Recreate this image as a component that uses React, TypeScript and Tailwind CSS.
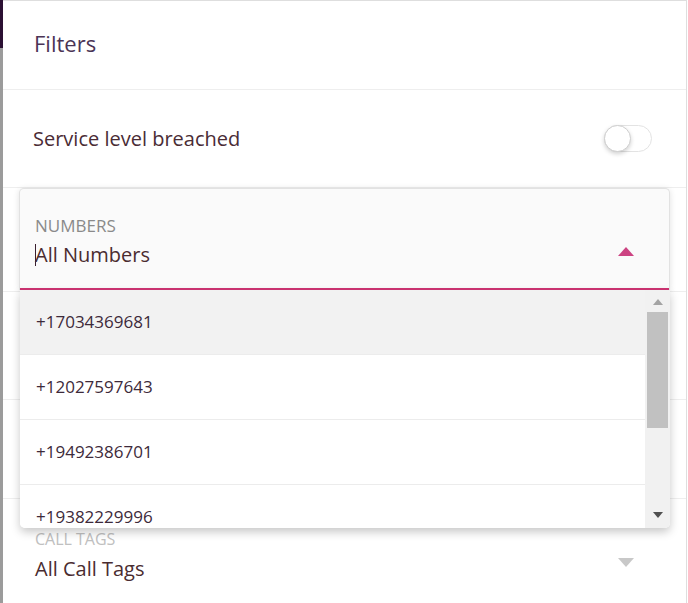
import React from "react";

const numbers = ["+17034369681", "+12027597643", "+19492386701", "+19382229996"];

function Caret({ up, className }: { up?: boolean; className: string }) {
  return (
    <svg width="16" height="9" viewBox="0 0 16 9" className={className}>
      {up ? <path d="M0 9 L8 0 L16 9 Z" fill="currentColor" /> : <path d="M0 0 L8 9 L16 0 Z" fill="currentColor" />}
    </svg>
  );
}

function Toggle() {
  return (
    <div className="relative w-[48px] h-[27px]">
      <div className="absolute inset-0 rounded-full border border-[#e3e3e3] bg-white" />
      <div className="absolute left-0 top-0 w-[27px] h-[27px] rounded-full bg-white border border-[#cfcfcf] shadow-[0_2px_4px_rgba(0,0,0,0.18)]" />
    </div>
  );
}

function NumbersDropdown() {
  return (
    <div className="absolute left-[16px] top-[187px] w-[651px]">
      {/* input */}
      <div className="h-[102px] rounded-t-[5px] border border-b-0 border-[#e2e2e2] bg-[#fafafa] shadow-[0_1px_6px_rgba(0,0,0,0.12)] flex flex-col">
        <div className="flex-1 flex items-end justify-between pl-[15px] pr-[35px] pb-[20px]">
          <div className="flex flex-col">
            <span className="text-[17px] leading-[20px] text-[#8a8a8a]">NUMBERS</span>
            <div className="flex items-center mt-[6px]">
              <span className="w-px h-[22px] bg-[#3a2030] -mr-px" />
              <span className="text-[20px] leading-[26px] text-[#4a2c30]">All Numbers</span>
            </div>
          </div>
          <Caret up className="text-[#cc4382] mb-[12px]" />
        </div>
        <div className="h-[2px] bg-[#c9326f]" />
      </div>
      {/* list */}
      <div className="ml-px w-[650px] h-[238px] flex bg-white rounded-b-[5px] overflow-hidden shadow-[0_4px_10px_rgba(0,0,0,0.22)]">
        <div className="flex-1 flex flex-col overflow-hidden">
          {numbers.map((n, i) => (
            <div
              key={n}
              className={`shrink-0 h-[65px] flex items-center pl-[16px] border-b border-[#ececec] text-[17px] text-[#3d2a3a] ${
                i === 0 ? "bg-[#f2f2f2]" : "bg-white"
              }`}
            >
              {n}
            </div>
          ))}
        </div>
        <div className="w-[25px] bg-[#f1f1f1] flex flex-col items-center">
          <svg width="10" height="6" viewBox="0 0 10 6" className="mt-[9px] text-[#a3a3a3]">
            <path d="M0 6 L5 0 L10 6 Z" fill="currentColor" />
          </svg>
          <div className="mt-[7px] w-[21px] h-[116px] bg-[#c1c1c1]" />
          <div className="flex-1" />
          <svg width="10" height="6" viewBox="0 0 10 6" className="mb-[10px] text-[#505050]">
            <path d="M0 0 L5 6 L10 0 Z" fill="currentColor" />
          </svg>
        </div>
      </div>
    </div>
  );
}

export default function App() {
  return (
    <div className="w-[688px] h-[603px] flex bg-white overflow-hidden" style={{ fontFamily: "'Open Sans', 'Noto Sans', sans-serif" }}>
      <div className="w-[3px] flex flex-col">
        <div className="h-[48px] bg-[#2b1033]" />
        <div className="flex-1 bg-[#9b9b9b]" />
      </div>
      <main className="relative w-[684px] border-t border-r border-[#dedede] bg-white flex flex-col">
        <header className="h-[89px] shrink-0 border-b border-[#eeeeee] flex items-center pl-[31px] pb-[3px]">
          <h1 className="text-[22px] text-[#4b3456]">Filters</h1>
        </header>

        <section className="h-[98px] shrink-0 border-b border-[#eeeeee] flex items-center justify-between pl-[30px] pr-[34px]">
          <span className="text-[20px] text-[#4a2c35]">Service level breached</span>
          <Toggle />
        </section>

        <section className="h-[104px] shrink-0 border-b border-[#eeeeee]" />
        <section className="h-[108px] shrink-0 border-b border-[#eeeeee]" />
        <section className="h-[99px] shrink-0 border-b border-[#eeeeee]" />

        <section className="flex-1 flex items-start justify-between pl-[32px] pr-[52px] pt-[30px]">
          <div className="flex flex-col">
            <span className="text-[16px] leading-[20px] text-[#c0c0c0]">CALL TAGS</span>
            <span className="mt-[7px] text-[20px] leading-[26px] text-[#4a2c30]">All Call Tags</span>
          </div>
          <Caret className="text-[#c8c8c8] mt-[29px]" />
        </section>

        <NumbersDropdown />
      </main>
    </div>
  );
}
